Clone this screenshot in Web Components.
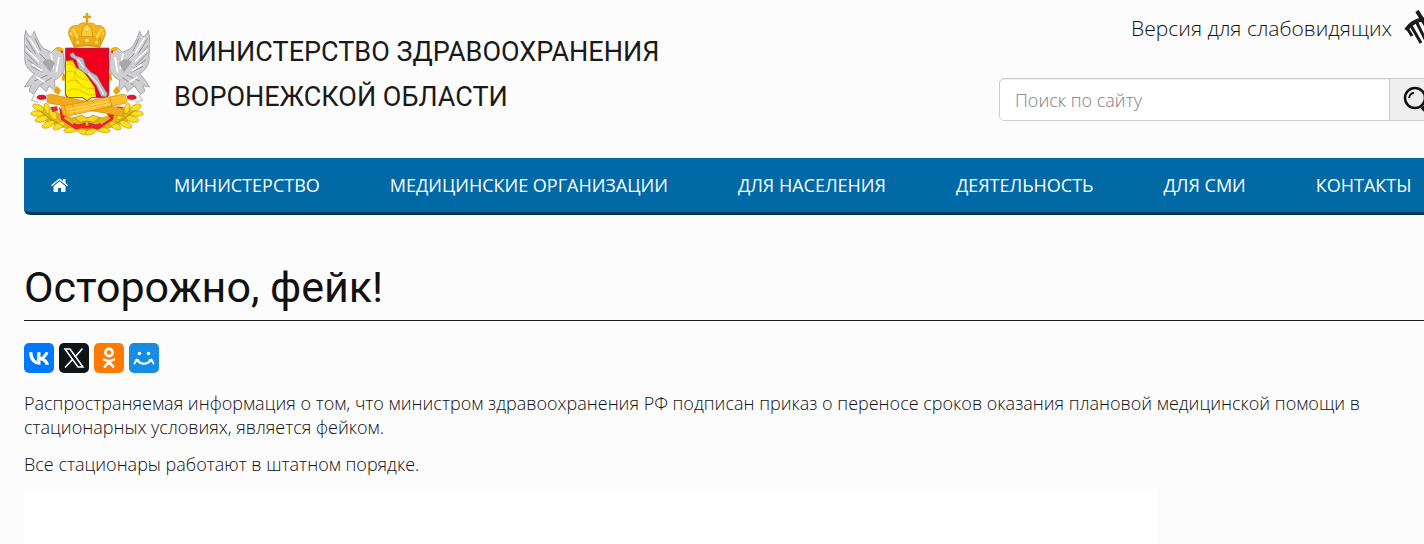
<!DOCTYPE html>
<html lang="ru">
<head>
<meta charset="UTF-8">
<meta name="viewport" content="width=device-width, initial-scale=1">
<title>Осторожно, фейк!</title>
<style>
  body {
    margin: 0;
    background: #fcfcfc;
    color: #111;
    font-family: "Open Sans", "Noto Sans", sans-serif;
    font-weight: 300;
    overflow-x: hidden;
  }
</style>
</head>
<body>
<site-page>
  <site-header slot="header"></site-header>
  <site-nav slot="nav">
    <nav-item href="#home" home></nav-item>
    <nav-item href="#ministry">МИНИСТЕРСТВО</nav-item>
    <nav-item href="#orgs">МЕДИЦИНСКИЕ ОРГАНИЗАЦИИ</nav-item>
    <nav-item href="#people">ДЛЯ НАСЕЛЕНИЯ</nav-item>
    <nav-item href="#activity">ДЕЯТЕЛЬНОСТЬ</nav-item>
    <nav-item href="#media">ДЛЯ СМИ</nav-item>
    <nav-item href="#contacts">КОНТАКТЫ</nav-item>
  </site-nav>
  <news-article>
    <span slot="title">Осторожно, фейк!</span>
    <share-list slot="share"></share-list>
    <p>Распространяемая информация о том, что министром здравоохранения РФ подписан приказ о переносе сроков оказания плановой медицинской помощи в стационарных условиях, является фейком.</p>
    <p>Все стационары работают в штатном порядке.</p>
  </news-article>
</site-page>

<script>
class SitePage extends HTMLElement {
  constructor() {
    super();
    this.attachShadow({mode: 'open'});
  }

  connectedCallback() {
    this.shadowRoot.innerHTML = `
    <style>
      :host {
        display: block;
        overflow: hidden;
      }
      .container {
        margin: 0 -24px 0 24px;
      }
    </style>
    <div class="container">
      <slot name="header"></slot>
      <slot name="nav"></slot>
      <slot></slot>
    </div>`;
  }
}

class RegionEmblem extends HTMLElement {
  constructor() {
    super();
    this.attachShadow({mode: 'open'});
  }

  connectedCallback() {
    this.shadowRoot.innerHTML = `
    <style>
      :host { display: block; }
      svg { display: block; width: 126px; height: 124px; }
    </style>
    <svg viewBox="29 25 378 372" aria-hidden="true">
      <defs>
        <g id="bird">
          <path d="M34 80C44 104 54 104 60 82C66 98 72 120 90 136L112 146L124 134C132 128 142 132 146 142L150 182C152 206 138 222 120 230L124 264L104 246L96 264L76 246L58 272L44 262L50 246L30 250L48 224L60 210C38 198 28 176 32 154C28 128 28 104 34 80Z" fill="#cfcfd2" stroke="#8b8b90" stroke-width="2"/>
          <path d="M36 104L64 150M34 126L66 166M34 146L72 184M40 168L80 196M50 188L86 206M62 104L80 142M76 150L98 172M60 232L100 214M78 244L112 222" stroke="#929297" stroke-width="3" fill="none"/>
          <path d="M44 102L74 148M36 136L74 174M54 182L84 202M110 150L118 196M134 160L126 206M66 220L92 236" stroke="#fff" stroke-width="5" fill="none"/>
          <path d="M84 176C96 162 112 164 122 178L108 206Z" fill="#a7a7ac"/>
          <path d="M124 134L136 130L148 136L146 144L130 142Z" fill="#f4b400"/>
          <path d="M138 140L147 143L142 150Z" fill="#e3202c"/>
          <path d="M146 206L154 216L150 232L142 230Z" fill="#e9a400"/>
          <path d="M128 246L140 262L132 274L118 264Z" fill="#e9a400"/>
        </g>
        <g id="branch">
          <path d="M70 312L100 312L140 330L170 340H218V382L150 374L96 356Z" fill="#e2b416"/>
          <g fill="#f8df20" stroke="#c79a10" stroke-width="2">
            <ellipse cx="72" cy="312" rx="18" ry="9" transform="rotate(25 72 312)"/>
            <ellipse cx="98" cy="314" rx="16" ry="8" transform="rotate(70 98 314)"/>
            <ellipse cx="68" cy="330" rx="19" ry="8"/>
            <ellipse cx="82" cy="346" rx="20" ry="9" transform="rotate(-15 82 346)"/>
            <ellipse cx="116" cy="332" rx="18" ry="9" transform="rotate(60 116 332)"/>
            <ellipse cx="102" cy="362" rx="20" ry="9" transform="rotate(-25 102 362)"/>
            <ellipse cx="134" cy="366" rx="20" ry="9" transform="rotate(-30 134 366)"/>
            <ellipse cx="172" cy="378" rx="24" ry="8" transform="rotate(-10 172 378)"/>
            <ellipse cx="206" cy="384" rx="18" ry="8" transform="rotate(20 206 384)"/>
          </g>
          <path d="M74 320L108 346L148 368" stroke="#a98208" stroke-width="2" fill="none"/>
          <path d="M134 310L158 332L148 344L180 366L214 356L214 370L184 378L140 348Z" fill="#e8262a"/>
          <path d="M108 310L128 308L132 320L114 326Z" fill="#d8322a"/>
        </g>
      </defs>
      <use href="#bird"/>
      <use href="#bird" transform="matrix(-1 0 0 1 436 0)"/>
      <use href="#branch"/>
      <use href="#branch" transform="matrix(-1 0 0 1 436 0)"/>
      <path d="M153 133H284V270Q284 282 270 282H232L218 292L204 282H166Q153 282 153 270Z" fill="#f1001d" stroke="#555" stroke-width="2"/>
      <path d="M155 172L174 170L186 192L206 204L222 224L240 250L245 280H232L218 290L204 280H166Q155 280 155 268Z" fill="#fff100"/>
      <path d="M158 184Q172 174 184 194M156 206Q176 196 186 212T222 230M158 234Q182 222 196 240T238 254M160 262Q182 248 204 264T244 272M186 194L180 222L206 250" fill="none" stroke="#c7a600" stroke-width="2"/>
      <path d="M166 152L176 146L184 156L206 164L214 188L228 204L248 216L264 246L280 270L276 280L260 278L246 246L220 214L194 196L186 170L170 160Z" fill="#bcbcc3" stroke="#6f6f78" stroke-width="2"/>
      <path d="M190 166L208 192M222 210L250 240L268 272" stroke="#ececf0" stroke-width="4" fill="none"/>
      <g stroke="#d18a06" stroke-width="2">
        <path d="M94 276L110 272L330 316L326 338L304 334L100 298Z" fill="#f0ab1c"/>
        <path d="M342 276L326 272L140 308L146 334L160 338L336 298Z" fill="#f9bd2a"/>
        <path d="M232 288L248 314M176 302L182 332M286 280L292 308M150 306L156 336" fill="none"/>
      </g>
      <path d="M160 318L280 294M168 326L290 300" stroke="#ffd75a" stroke-width="4"/>
      <ellipse cx="82" cy="281" rx="16" ry="9" fill="#d91b2b" stroke="#eee" stroke-width="3"/>
      <ellipse cx="352" cy="281" rx="16" ry="9" fill="#d91b2b" stroke="#eee" stroke-width="3"/>
      <path d="M60 274L52 290L72 296M374 274L384 290L362 296" fill="none" stroke="#c5c5c9" stroke-width="4"/>
      <path d="M180 342L202 334L218 344L236 334L256 342L238 356L218 352L198 356Z" fill="#f5d51a" stroke="#a98208" stroke-width="2"/>
      <path d="M176 362Q218 380 260 362" fill="none" stroke="#e8262a" stroke-width="9"/>
      <g stroke="#c98d0a" stroke-width="2">
        <path d="M180 132L164 96C158 76 172 62 190 66C198 56 210 56 218 60C228 56 240 58 246 66C264 62 278 76 272 96L256 132Q218 122 180 132Z" fill="#f4b41a"/>
        <path d="M206 116C196 92 204 66 218 62C232 66 240 92 230 116Z" fill="#fbca3a"/>
        <path d="M178 104Q218 92 260 104L256 130Q218 118 180 130Z" fill="#f0a914"/>
      </g>
      <path d="M176 76L190 104M262 76L246 104" stroke="#ffdf60" stroke-width="6"/>
      <path d="M214 28H222V36H230V43H222V58H214V43H206V36H214Z" fill="#e6a010"/>
      <g fill="#fff0a0">
        <circle cx="190" cy="116" r="4"/><circle cx="218" cy="110" r="5"/><circle cx="246" cy="116" r="4"/>
        <circle cx="218" cy="76" r="4"/><circle cx="170" cy="90" r="3"/><circle cx="266" cy="90" r="3"/>
      </g>
    </svg>`;
  }
}

class SiteSearch extends HTMLElement {
  constructor() {
    super();
    this.attachShadow({mode: 'open'});
  }

  connectedCallback() {
    this.shadowRoot.innerHTML = `
    <style>
      :host { display: block; }
      form {
        display: flex;
        height: 43px;
      }
      input {
        box-sizing: border-box;
        flex: 1;
        min-width: 0;
        margin: 0;
        padding: 0 15px;
        border: 1px solid #ccc;
        border-radius: 5px 0 0 5px;
        background: #fff;
        box-shadow: inset 0 1px 1px rgba(0, 0, 0, .075);
        color: #555;
        font: inherit;
        font-size: 18px;
      }
      input::placeholder {
        color: #808080;
        opacity: 1;
      }
      button {
        width: 58px;
        padding: 0 0 0 13px;
        border: 1px solid #ccc;
        border-left: 0;
        background: #eee;
      }
      svg { display: block; width: 28px; height: 28px; }
    </style>
    <form role="search">
      <input type="search" placeholder="Поиск по сайту" aria-label="Поиск по сайту">
      <button type="button" aria-label="Найти">
        <svg viewBox="0 0 28 28" fill="none" stroke="#111">
          <circle cx="12" cy="12" r="10" stroke-width="2.500"/>
          <path d="M6 12Q7 7 11 7" stroke-width="1.800"/>
          <path d="M19 21L26 28" stroke-width="4"/>
        </svg>
      </button>
    </form>`;
  }
}

class SiteHeader extends HTMLElement {
  constructor() {
    super();
    this.attachShadow({mode: 'open'});
  }

  connectedCallback() {
    this.shadowRoot.innerHTML = `
    <style>
      :host { display: block; }
      header {
        display: flex;
        align-items: flex-start;
        height: 158px;
      }
      region-emblem { padding-top: 12px; }
      .name {
        flex: 1;
        margin: 30px 0 0 24px;
        color: #1a1a1a;
        font-family: Roboto, "Open Sans", sans-serif;
        font-size: 27px;
        font-weight: 400;
        line-height: 45px;
        text-decoration: none;
      }
      .tools { width: 449px; }
      .vision {
        display: flex;
        align-items: center;
        justify-content: flex-end;
        gap: 12px;
        height: 56px;
        margin-bottom: 22px;
        color: #111;
        font-size: 21px;
        text-decoration: none;
      }
      .vision svg { width: 44px; height: 36px; }
    </style>
    <header>
      <region-emblem></region-emblem>
      <a class="name" href="#home">МИНИСТЕРСТВО ЗДРАВООХРАНЕНИЯ<br>ВОРОНЕЖСКОЙ ОБЛАСТИ</a>
      <div class="tools">
        <a class="vision" href="#vision">Версия для слабовидящих
          <svg viewBox="0 0 44 36" fill="none" stroke="#1a1a1a" aria-hidden="true">
            <path d="M13 1L34 35" stroke-width="4"/>
            <path d="M2 20Q8 10 22 9T43 20Q36 30 28 32" stroke-width="4"/>
            <path d="M3 18L8 26M6 14L17 33M12 11L23 33" stroke-width="3"/>
          </svg>
        </a>
        <site-search></site-search>
      </div>
    </header>`;
  }
}

class SiteNav extends HTMLElement {
  constructor() {
    super();
    this.attachShadow({mode: 'open'});
  }

  connectedCallback() {
    this.shadowRoot.innerHTML = `
    <style>
      :host { display: block; }
      nav {
        display: flex;
        height: 54px;
        border-bottom: 3px solid #003558;
        border-radius: 0 0 6px 6px;
        background: #0069a6;
      }
    </style>
    <nav><slot></slot></nav>`;
  }
}

class NavItem extends HTMLElement {
  constructor() {
    super();
    this.attachShadow({mode: 'open'});
  }

  connectedCallback() {
    const home = this.hasAttribute('home');
    const icon = `
      <svg viewBox="0 0 17 14" fill="#fff" aria-hidden="true">
        <path d="M8.500 3.200L14.500 8.200V13.200Q14.500 14 13.700 14H10V10H7V14H3.300Q2.500 14 2.500 13.200V8.200Z"/>
        <path d="M0 7.200L7.500 1Q8.500 .2 9.500 1L12 3.100V1H14.500V5.100L17 7.200L16.200 8.200L8.500 1.900L.8 8.200Z"/>
      </svg>`;
    this.shadowRoot.innerHTML = `
    <style>
      :host {
        display: block;
        flex: none;
      }
      a {
        display: flex;
        align-items: center;
        height: 100%;
        padding: 0 35px;
        color: #fff;
        font-size: 18px;
        font-weight: 400;
        text-decoration: none;
      }
      a.home { padding: 0 71px 0 27px; }
      svg { width: 17px; height: 14px; }
    </style>
    <a href="${this.getAttribute('href')}" ${home ? 'class="home" aria-label="Главная"' : ''}>${home ? icon : '<slot></slot>'}</a>`;
  }
}

class ShareList extends HTMLElement {
  constructor() {
    super();
    this.attachShadow({mode: 'open'});
  }

  connectedCallback() {
    this.shadowRoot.innerHTML = `
    <style>
      :host { display: block; }
      ul {
        display: flex;
        gap: 5px;
        margin: 0;
        padding: 0;
        list-style: none;
      }
      a {
        display: block;
        width: 30px;
        height: 30px;
        border-radius: 5px;
      }
      svg { display: block; width: 30px; height: 30px; }
      .vk { background: #07f; }
      .x { background: #0f1419; }
      .ok { background: #ff7a00; }
      .mm { background: #168de2; }
    </style>
    <ul>
      <li><a class="vk" href="#vk" aria-label="ВКонтакте"><svg viewBox="0 0 24 24"><path d="M12.878 17.304c-5.411 0-8.695-3.755-8.823-9.994h2.74c.086 4.583 2.171 6.528 3.77 6.925V7.31h2.627v3.954c1.542-.17 3.155-1.97 3.698-3.954h2.584c-.414 2.441-2.17 4.24-3.412 4.983 1.242.6 3.24 2.17 4.011 5.01h-2.84c-.6-1.898-2.07-3.369-4.04-3.569v3.57h-.315Z" fill="#fff"/></svg></a></li>
      <li><a class="x" href="#x" aria-label="X"><svg viewBox="0 0 30 30" fill="none" stroke="#fff"><path d="M6 6H11L24 24H19Z" stroke-width="1.500"/><path d="M23.500 5.500L16 14M13.500 16.500L6 24.500" stroke-width="1.600"/></svg></a></li>
      <li><a class="ok" href="#ok" aria-label="Одноклассники"><svg viewBox="0 0 30 30" fill="none" stroke="#fff" stroke-linecap="round"><circle cx="15" cy="9.500" r="3.600" stroke-width="2.600"/><path d="M10 16.500Q15 19.500 20 16.500M15 19L10.800 23.600M15 19L19.200 23.600" stroke-width="2.600"/></svg></a></li>
      <li><a class="mm" href="#mm" aria-label="Мой Мир"><svg viewBox="0 0 30 30" fill="none" stroke="#fff"><circle cx="10.500" cy="10.500" r="1.700" fill="#fff" stroke="none"/><circle cx="19.500" cy="10.500" r="1.700" fill="#fff" stroke="none"/><path d="M7.500 17Q15 24.500 22.500 17M5.500 20.500L7.500 16.500L9.500 17M24.500 20.500L22.500 16.500L20.500 17" stroke-width="1.800" stroke-linecap="round"/></svg></a></li>
    </ul>`;
  }
}

class NewsArticle extends HTMLElement {
  constructor() {
    super();
    this.attachShadow({mode: 'open'});
  }

  connectedCallback() {
    this.shadowRoot.innerHTML = `
    <style>
      :host { display: block; }
      h1 {
        margin: 42px 0 22px;
        padding-bottom: 3px;
        border-bottom: 1px solid #1a1a1a;
        font-family: Roboto, "Open Sans", sans-serif;
        font-size: 43px;
        font-weight: 400;
        line-height: 60px;
      }
      .text {
        padding: 18px 48px 0 0;
        font-size: 18px;
        line-height: 24px;
      }
      ::slotted(p) { margin: 0 0 13px; }
      .media {
        max-width: 1133px;
        height: 60px;
        background: #fff;
      }
    </style>
    <article>
      <h1><slot name="title"></slot></h1>
      <slot name="share"></slot>
      <div class="text"><slot></slot></div>
      <div class="media"></div>
    </article>`;
  }
}

customElements.define('region-emblem', RegionEmblem);
customElements.define('site-search', SiteSearch);
customElements.define('site-header', SiteHeader);
customElements.define('nav-item', NavItem);
customElements.define('site-nav', SiteNav);
customElements.define('share-list', ShareList);
customElements.define('news-article', NewsArticle);
customElements.define('site-page', SitePage);
</script>
</body>
</html>
